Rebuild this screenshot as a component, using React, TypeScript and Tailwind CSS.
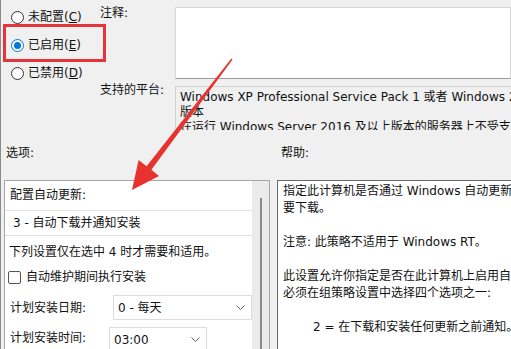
import React from "react";

function Radio({ checked = false }: { checked?: boolean }) {
  return (
    <span
      className={
        checked
          ? "flex h-[13px] w-[13px] items-center justify-center rounded-full border border-[#0078d7] bg-white"
          : "flex h-[13px] w-[13px] items-center justify-center rounded-full border border-[#333] bg-white"
      }
    >
      {checked && <span className="h-[7px] w-[7px] rounded-full bg-[#0078d7]" />}
    </span>
  );
}

function Chevron() {
  return (
    <svg width="9" height="5" viewBox="0 0 9 5" fill="none" aria-hidden="true">
      <path d="M0.5 0.5L4.5 4.5L8.5 0.5" stroke="#606060" strokeWidth="1" />
    </svg>
  );
}

export default function App() {
  return (
    <div className="relative flex h-[349px] w-[511px] flex-col overflow-hidden border-l border-[#8c8c8c] bg-[#f0f0f0] font-['DejaVu_Sans','Noto_Sans_CJK_SC',sans-serif] text-[12px] leading-[16px] text-[#111]">
      {/* top: state radios, comment, platform */}
      <div className="flex h-[141px] shrink-0">
        <div className="w-[99px] shrink-0">
          <div className="h-[24px] pl-[10px] pt-[9px]">
            <label className="flex items-center gap-[4px] whitespace-nowrap">
              <Radio />
              <span>
                未配置(<span className="underline">C</span>)
              </span>
            </label>
          </div>
          <div className="ml-[2px] flex h-[38px] w-[103px] items-center border-[3px] border-[#e5343a] pl-[5px] pt-[4px]">
            <label className="flex items-center gap-[4px] whitespace-nowrap">
              <Radio checked />
              <span>
                已启用(<span className="underline">E</span>)
              </span>
            </label>
          </div>
          <div className="h-[22px] pl-[10px] pt-[3px]">
            <label className="flex items-center gap-[4px] whitespace-nowrap">
              <Radio />
              <span>
                已禁用(<span className="underline">D</span>)
              </span>
            </label>
          </div>
        </div>

        <div className="w-[75px] shrink-0 pt-[5px]">
          <div>注释:</div>
          <div className="mt-[61px] whitespace-nowrap">支持的平台:</div>
        </div>

        <div className="flex min-w-0 flex-1 flex-col pt-[7px]">
          <div className="h-[72px] border border-[#d6d6d6] border-b-[#9a9a9a] bg-white" />
          <div className="mt-[7px] h-[44px] overflow-hidden border-l border-t border-[#d2d2d2] pl-[4px] pt-[3px] leading-[15px]">
            <div className="whitespace-nowrap">
              Windows XP Professional Service Pack 1 或者 Windows 2000 Service Pack 3，不包括
            </div>
            <div className="whitespace-nowrap">版本</div>
            <div className="whitespace-nowrap">
              在运行 Windows Server 2016 及以上版本的服务器上不受支持
            </div>
          </div>
        </div>
      </div>

      {/* section labels */}
      <div className="flex h-[39px] shrink-0 pt-[4px]">
        <div className="w-[280px] shrink-0 pl-[5px]">选项:</div>
        <div>帮助:</div>
      </div>

      {/* panels */}
      <div className="flex min-h-0 flex-1">
        <div className="ml-[3px] flex w-[266px] shrink-0 border border-b-0 border-[#a6a6a6] bg-white">
          <div className="min-w-0 flex-1 pt-[6px]">
            <div className="pl-[5px]">配置自动更新:</div>
            <div className="mt-[7px] flex h-[26px] items-center border-y border-[#e3e3e3] pl-[8px]">
              3 - 自动下载并通知安装
            </div>
            <div className="mt-[8px] whitespace-nowrap pl-[4px]">
              下列设置仅在选中 4 时才需要和适用。
            </div>
            <label className="mt-[9px] flex items-center gap-[5px] pl-[3px]">
              <span className="h-[13px] w-[13px] rounded-[2px] border border-[#555] bg-white" />
              <span>自动维护期间执行安装</span>
            </label>
            <div className="mt-[10px] flex h-[25px] items-center">
              <div className="w-[108px] shrink-0 pl-[5px]">计划安装日期:</div>
              <div className="flex h-[25px] w-[139px] items-center justify-between border border-[#dcdcdc] bg-white pl-[4px] pr-[6px]">
                <span>0 - 每天</span>
                <Chevron />
              </div>
            </div>
            <div className="mt-[7px] flex h-[25px] items-start">
              <div className="w-[104px] shrink-0 pl-[5px] pt-[3px]">计划安装时间:</div>
              <div className="flex h-[25px] w-[98px] items-center justify-between border border-[#dcdcdc] bg-white pl-[4px] pr-[6px]">
                <span>03:00</span>
                <Chevron />
              </div>
            </div>
          </div>
          <div className="w-[17px] shrink-0 bg-[#ebebeb] pt-[17px]">
            <div className="ml-[8px] h-full w-[2px] bg-[#8a8a8a]" />
          </div>
        </div>

        <div className="ml-[7px] min-w-0 flex-1 overflow-hidden border-l border-t border-[#6a6a6a] bg-white pl-[5px] pt-[2px] leading-[17px]">
          <div className="whitespace-nowrap">
            指定此计算机是否通过 Windows 自动更新服务来接收安全更新和其他重
          </div>
          <div className="whitespace-nowrap">要下载。</div>
          <div className="h-[17px]" />
          <div className="whitespace-nowrap">注意: 此策略不适用于 Windows RT。</div>
          <div className="h-[17px]" />
          <div className="whitespace-nowrap">
            此设置允许你指定是否在此计算机上启用自动更新。如果启用此服务，则
          </div>
          <div className="whitespace-nowrap">必须在组策略设置中选择四个选项之一:</div>
          <div className="h-[17px]" />
          <div className="whitespace-nowrap pl-[30px]">2 = 在下载和安装任何更新之前通知。</div>
        </div>
      </div>

      {/* red annotation arrow */}
      <svg
        className="pointer-events-none absolute left-0 top-0"
        width="511"
        height="349"
        viewBox="0 0 511 349"
        aria-hidden="true"
      >
        <polygon
          points="230.4,58.5 231.6,59.5 150.4,169.8 158,176 131,190 137.6,160 145.6,166.2"
          fill="#e8322f"
        />
      </svg>
    </div>
  );
}
